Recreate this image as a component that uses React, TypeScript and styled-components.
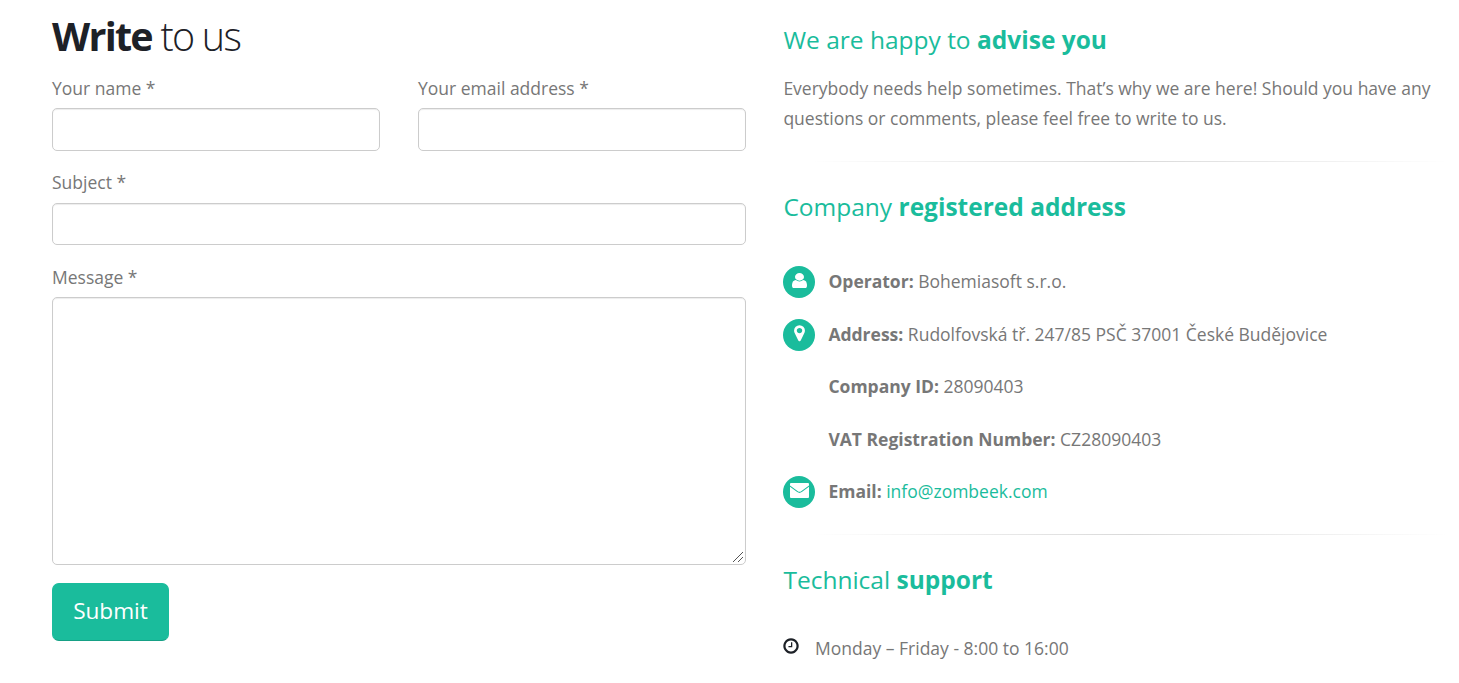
import React from 'react'
import styled, { createGlobalStyle } from 'styled-components'

const GlobalStyle = createGlobalStyle`
  * {
    box-sizing: border-box;
  }

  body {
    margin: 0;
    overflow: hidden;
    background: #fff;
    color: #777;
    font-family: 'Open Sans', Arial, sans-serif;
    font-size: 17.5px;
    line-height: 30px;
  }
`

const Page = styled.div`
  display: flex;
  gap: 37.4px;
  width: 1478px;
  height: 683px;
  padding-left: 52px;
  overflow: hidden;
`

const Column = styled.div`
  flex: 0 0 694px;
`

const Title = styled.h1`
  margin: 0;
  padding-top: 9px;
  color: #1d2127;
  font-size: 39.5px;
  font-weight: 300;
  line-height: 55px;
  letter-spacing: -1.75px;

  strong {
    font-weight: 700;
  }
`

const Form = styled.form`
  padding-top: 9px;
`

const FieldRow = styled.div`
  display: flex;
  gap: 38px;
  height: 94.5px;
`

const Field = styled.label`
  display: flex;
  flex: 1;
  flex-direction: column;
  gap: 5px;
`

const SubjectField = styled(Field)`
  margin-top: -1px;
  gap: 6px;
`

const Input = styled.input`
  width: 100%;
  height: 42.5px;
  padding: 7px 15px;
  border: 1px solid #ccc;
  border-radius: 5px;
  outline: none;
  font: inherit;
  box-shadow: inset 0 1px 1px rgba(0, 0, 0, 0.075);
`

const TextArea = styled.textarea`
  width: 100%;
  height: 268px;
  padding: 7px 15px;
  border: 1px solid #ccc;
  border-radius: 5px;
  outline: none;
  font: inherit;
  resize: vertical;
  box-shadow: inset 0 1px 1px rgba(0, 0, 0, 0.075);

  &::-webkit-resizer {
    background: linear-gradient(
      135deg,
      transparent 6.6px,
      #555 6.6px 7.5px,
      transparent 7.5px 10.1px,
      #555 10.1px 11px,
      transparent 11px
    ) no-repeat 3px 3px / 10px 10px;
  }
`

const Submit = styled.button`
  display: block;
  width: 117px;
  height: 58px;
  margin-top: 18px;
  padding: 0 0 3px;
  border: 1px solid #1abc9c;
  border-bottom-color: #16a085;
  border-radius: 7px;
  background: #1abc9c;
  color: #fff;
  font-family: inherit;
  font-size: 22.6px;
  cursor: pointer;
`

const Heading = styled.h4<{ $top: number }>`
  margin: 0;
  padding-top: ${({ $top }) => $top}px;
  color: #1abc9c;
  font-size: 24.5px;
  font-weight: 400;
  line-height: 34px;

  strong {
    font-weight: 700;
  }
`

const Lead = styled.p`
  width: 656px;
  margin: 0;
  padding-top: 16px;
`

const Divider = styled.hr`
  height: 1px;
  margin: 28px 0 0;
  border: 0;
  background: linear-gradient(to right, transparent 4%, rgba(0, 0, 0, 0.15), transparent 96%);
`

const ContactList = styled.ul`
  margin: 0;
  padding: 31px 0 0;
  list-style: none;
`

const ContactItem = styled.li`
  display: flex;
  align-items: center;
  height: 52.5px;

  a {
    color: #1abc9c;
    text-decoration: none;
  }
`

const IconSlot = styled.span`
  flex: 0 0 45px;
`

const Badge = styled.span`
  display: flex;
  align-items: center;
  justify-content: center;
  width: 32px;
  height: 32px;
  margin: 1.6px 0 0 -0.4px;
  padding-bottom: 3px;
  border-radius: 50%;
  background: #1abc9c;
  color: #fff;
`

const ListDivider = styled(Divider)`
  margin-top: 16px;
`

const Hours = styled.div`
  display: flex;
  align-items: center;
  gap: 15px;
  padding-top: 36px;

  svg {
    margin: 0 0 3px -1.4px;
    color: #1d2127;
  }
`

interface IconShape {
  width: number
  height: number
  box: string
  path: string
}

const icons = {
  user: {
    width: 15,
    height: 15.5,
    box: '256 128 1280 1536',
    path: 'M1536 1399q0 109-62.5 187t-150.5 78h-854q-88 0-150.5-78t-62.5-187q0-85 8.5-160.5t31.5-152 58.5-131 94-89 134.5-34.5q131 128 313 128t313-128q76 0 134.5 34.5t94 89 58.5 131 31.5 152 8.5 160.5zm-256-887q0 159-112.5 271.5t-271.5 112.5-271.5-112.5-112.5-271.5 112.5-271.5 271.5-112.5 271.5 112.5 112.5 271.5z',
  },
  marker: {
    width: 19,
    height: 18.5,
    box: '0 0 1792 1792',
    path: 'M1152 640q0-106-75-181t-181-75-181 75-75 181 75 181 181 75 181-75 75-181zm256 0q0 109-33 179l-364 774q-16 33-47.5 52t-67.5 19-67.5-19-46.5-52l-365-774q-33-70-33-179 0-212 150-362t362-150 362 150 150 362z',
  },
  envelope: {
    width: 19,
    height: 15,
    box: '0 0 19 15',
    path: 'M1 0h17q1 0 1 1v1.4L11.2 8.2q-1.7 1.2-3.4 0L0 2.4V1q0-1 1-1zM0 3.7l7.2 5.4q2.3 1.6 4.6 0L19 3.7V14q0 1-1 1H1q-1 0-1-1z',
  },
  clock: {
    width: 18,
    height: 18,
    box: '0 0 1792 1792',
    path: 'M1024 544v448q0 14-9 23t-23 9h-320q-14 0-23-9t-9-23v-64q0-14 9-23t23-9h224v-352q0-14 9-23t23-9h64q14 0 23 9t9 23zm416 352q0-148-73-273t-198-198-273-73-273 73-198 198-73 273 73 273 198 198 273 73 273-73 198-198 73-273zm224 0q0 209-103 385.5t-279.5 279.5-385.5 103-385.5-103-279.5-279.5-103-385.5 103-385.5 279.5-279.5 385.5-103 385.5 103 279.5 279.5 103 385.5z',
  },
} satisfies Record<string, IconShape>

type IconName = keyof typeof icons

const Icon: React.FC<{ name: IconName }> = ({ name }) => {
  const { width, height, box, path } = icons[name]

  return (
    <svg width={width} height={height} viewBox={box} preserveAspectRatio='none' fill='currentColor' aria-hidden='true'>
      <path d={path} />
    </svg>
  )
}

interface Contact {
  icon?: IconName
  label: string
  value: React.ReactNode
}

const contacts: Contact[] = [
  { icon: 'user', label: 'Operator:', value: 'Bohemiasoft s.r.o.' },
  { icon: 'marker', label: 'Address:', value: 'Rudolfovská tř. 247/85 PSČ 37001 České Budějovice' },
  { label: 'Company ID:', value: '28090403' },
  { label: 'VAT Registration Number:', value: 'CZ28090403' },
  { icon: 'envelope', label: 'Email:', value: <a href='mailto:info@zombeek.com'>info@zombeek.com</a> },
]

const App: React.FC = () => (
  <>
    <GlobalStyle />
    <Page>
      <Column>
        <Title><strong>Write</strong> to us</Title>
        <Form onSubmit={(e) => e.preventDefault()}>
          <FieldRow>
            <Field>
              Your name *
              <Input type='text' name='name' />
            </Field>
            <Field>
              Your email address *
              <Input type='email' name='email' />
            </Field>
          </FieldRow>
          <FieldRow>
            <SubjectField>
              Subject *
              <Input type='text' name='subject' />
            </SubjectField>
          </FieldRow>
          <Field>
            Message *
            <TextArea name='message' />
          </Field>
          <Submit type='submit'>Submit</Submit>
        </Form>
      </Column>
      <Column>
        <Heading $top={23}>We are happy to <strong>advise you</strong></Heading>
        <Lead>
          Everybody needs help sometimes. That’s why we are here! Should you have any questions or comments, please feel free to write to us.
        </Lead>
        <Divider />
        <Heading $top={28}>Company <strong>registered address</strong></Heading>
        <ContactList>
          {contacts.map(({ icon, label, value }) => (
            <ContactItem key={label}>
              <IconSlot>{icon && <Badge><Icon name={icon} /></Badge>}</IconSlot>
              <span><strong>{label}</strong> {value}</span>
            </ContactItem>
          ))}
        </ContactList>
        <ListDivider />
        <Heading $top={28}>Technical <strong>support</strong></Heading>
        <Hours>
          <Icon name='clock' />
          Monday – Friday - 8:00 to 16:00
        </Hours>
      </Column>
    </Page>
  </>
)

export default App
